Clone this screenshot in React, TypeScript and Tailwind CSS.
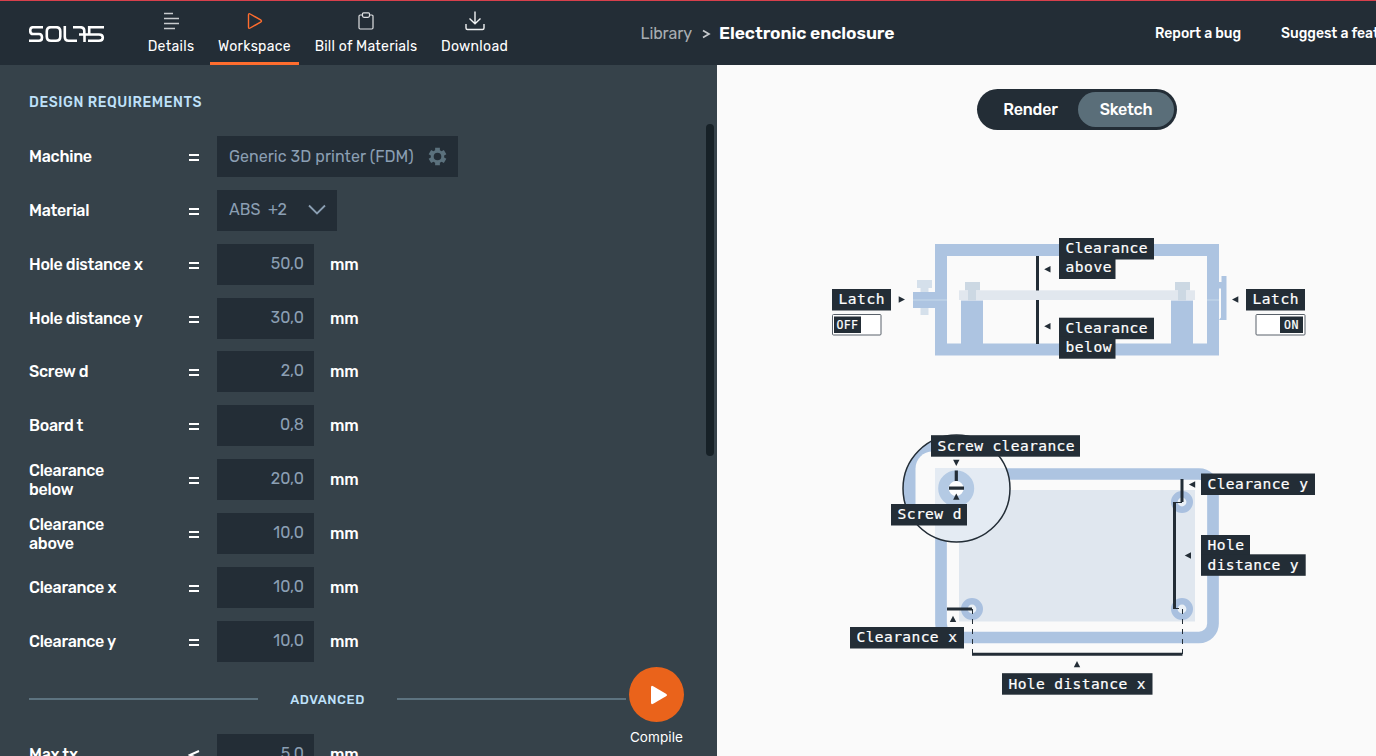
import React from "react";

const INK = "#232d36";

function Tab({ label, icon, active, className, tracking }: { label: string; icon: React.ReactNode; active?: boolean; className: string; tracking: string }) {
  return (
    <button className={`flex h-full shrink-0 flex-col items-center border-b-[3px] pt-[9px] ${active ? "border-[#ff6d2e]" : "border-transparent"} ${className}`}>
      <span className="flex h-[22px] items-center">{icon}</span>
      <span className={`mt-[5px] text-[14px] leading-[20px] whitespace-nowrap text-white ${tracking}`}>{label}</span>
    </button>
  );
}

const fields = [
  ["Hole distance x", "50,0"],
  ["Hole distance y", "30,0"],
  ["Screw d", "2,0"],
  ["Board t", "0,8"],
  ["Clearance below", "20,0"],
  ["Clearance above", "10,0"],
  ["Clearance x", "10,0"],
  ["Clearance y", "10,0"],
];

function Row({ label, sign = "=", children }: { label: string; sign?: string; children: React.ReactNode }) {
  return (
    <div className="flex h-[41px] shrink-0 items-center">
      <div className="w-[159px] shrink-0 pr-[54px] text-[16px] leading-[19px] font-medium tracking-[-0.28px] text-white">
        <span className={label.length > 12 && label.startsWith("Clear") ? "block" : "block whitespace-nowrap"}>{label}</span>
      </div>
      <div className="flex w-[29px] shrink-0 pt-[1px]">
        <svg width="12" height="12" viewBox="0 0 12 12" fill="none" stroke="white" strokeWidth="2">
          {sign === "=" ? <path d="M1 4h10M1 9h10" /> : <path d="M11 2L2 6l9 4" />}
        </svg>
      </div>
      {children}
    </div>
  );
}

function NumberField({ value }: { value: string }) {
  return (
    <>
      <div className="h-[41px] w-[97px] shrink-0 bg-[#232d36] pt-[9px] pr-[10px] text-right text-[16px] leading-[21px] text-[#8b9fb3]">{value}</div>
      <span className="ml-4 pt-[1px] text-[16px] font-medium tracking-[-0.2px] text-white">mm</span>
    </>
  );
}

function Tag({ x, y, w, h = 21.5, text, tw }: { x: number; y: number; w: number; h?: number; text: string; tw: number }) {
  return (
    <g>
      <rect x={x} y={y} width={w} height={h} fill={INK} />
      <text x={x + 6.5} y={y + 15.3} textLength={tw} fill="white" stroke="white" strokeWidth="0.2" fontSize="14.6" fontFamily='"DejaVu Sans Mono", monospace'>{text}</text>
    </g>
  );
}

function Arrow({ x, y, r }: { x: number; y: number; r: number }) {
  return <path d="M-3.3 0L3 -3.2V3.2Z" fill={INK} transform={`translate(${x} ${y}) rotate(${r})`} />;
}

function Hole({ x, y }: { x: number; y: number }) {
  return <circle cx={x} cy={y} r="7.7" fill="#eaf0f6" stroke="#a9c0df" strokeWidth="6.6" />;
}

function Sketch() {
  const mono = '"DejaVu Sans Mono", monospace';
  return (
    <svg className="block h-[626px] w-[659px]" viewBox="717 130 659 626">
      <rect x="941" y="250" width="272" height="99.5" fill="none" stroke="#adc4e1" strokeWidth="12" />
      <path d="M917 280h15v8h-3.5v27h-8v-27H917Z" fill="#d5e0eb" />
      <rect x="913" y="292" width="23" height="16" fill="#adc4e1" />
      <path d="M913 300h34M1207 300h12" stroke="#bfd2e8" strokeWidth="1.6" />
      <path d="M1219 282h2.5v-6h5v44h-7.5l2-2.5v-29H1219Z" fill="#adc4e1" />
      <rect x="961" y="300.5" width="22" height="44" fill="#adc4e1" />
      <rect x="1171" y="300.5" width="22" height="44" fill="#adc4e1" />
      <rect x="959" y="290.3" width="236" height="9.7" fill="#e1e7ee" />
      <path d="M965 282h15v8.3h-4v10.2h-8v-10.2h-3ZM1175 282h15v8.3h-4v10.2h-8v-10.2h-3Z" fill="#ccd8e3" />
      <path d="M1037.5 256v34.5M1037.5 300v44" stroke={INK} strokeWidth="3" />
      <Arrow x={1047.5} y={269.3} r={0} />
      <Arrow x={1047.5} y={326.3} r={0} />
      <Tag x={1059} y={238} w={95} text="Clearance" tw={82} />
      <Tag x={1059} y={257} w={56.5} h={22} text="above" tw={46} />
      <Tag x={1059} y={317.7} w={95} text="Clearance" tw={82} />
      <Tag x={1059} y={336.7} w={56.5} h={22} text="below" tw={46} />

      <Tag x={832} y={289} w={59} text="Latch" tw={46} />
      <Arrow x={901.7} y={299.5} r={180} />
      <rect x="832.5" y="314.5" width="48.5" height="20.5" rx="1" fill="white" stroke="#59616a" />
      <rect x="834" y="316.5" width="27" height="16.5" fill={INK} />
      <text x="836.5" y="329" textLength="21.5" fontSize="11.5" fontFamily={mono} fill="white" stroke="white" strokeWidth="0.2">OFF</text>
      <Tag x={1246} y={289} w={59} text="Latch" tw={46} />
      <Arrow x={1235.3} y={299.5} r={0} />
      <rect x="1256" y="314.5" width="49" height="20.5" rx="1" fill="white" stroke="#59616a" />
      <rect x="1280" y="316.5" width="23" height="16.5" fill={INK} />
      <text x="1284" y="329" textLength="14.5" fontSize="11.5" fontFamily={mono} fill="white" stroke="white" strokeWidth="0.2">ON</text>

      <rect x="941" y="474" width="272" height="163.5" rx="14" fill="none" stroke="#adc4e1" strokeWidth="11.7" />
      <rect x="959" y="490" width="236" height="131.5" fill="#e0e7ef" />
      <Hole x={1182} y={502} />
      <Hole x={972} y={609} />
      <Hole x={1182} y={609} />
      <path d="M1182 479v23M1174.5 502v107" stroke={INK} strokeWidth="3" />
      <path d="M1174 502.5h8M1174 608.5h5" stroke={INK} />
      <path d="M947 609h25M972 654.3h210.5" stroke={INK} strokeWidth="3" />
      <path d="M972.5 609v46M1182.5 609v46" stroke={INK} strokeDasharray="5 5" />

      <clipPath id="lens"><circle cx="956.5" cy="488.5" r="53.5" /></clipPath>
      <g clipPath="url(#lens)">
        <rect x="900" y="430" width="115" height="115" fill="#adc4e1" />
        <rect x="915.5" y="451.5" width="130" height="130" rx="17" fill="#fafafa" />
        <rect x="935" y="468" width="80" height="80" fill="#e4ebf3" />
      </g>
      <circle cx="956.5" cy="488.5" r="53.5" fill="none" stroke={INK} strokeWidth="1.5" />
      <circle cx="956.2" cy="488.5" r="12.75" fill="#fcfdfe" stroke="#b4cae4" strokeWidth="10.5" />
      <path d="M956.3 470.5V481M949 488.2h15" stroke={INK} strokeWidth="3.2" />
      <Arrow x={956.3} y={462.7} r={270} />
      <Arrow x={956.3} y={496.7} r={90} />
      <Tag x={931} y={435.2} w={149} text="Screw clearance" tw={137} />
      <Tag x={891} y={504} w={76} text="Screw d" tw={64} />

      <Arrow x={1192.2} y={484.5} r={0} />
      <Arrow x={1188} y={555.5} r={0} />
      <Tag x={1201} y={473.5} w={114} text="Clearance y" tw={100.5} />
      <Tag x={1201} y={535} w={49} text="Hole" tw={36.5} />
      <Tag x={1201} y={554.3} w={104.7} text="distance y" tw={91} />
      <Arrow x={953} y={619} r={90} />
      <Tag x={850} y={627} w={114} text="Clearance x" tw={100.5} />
      <Arrow x={1077} y={664.3} r={90} />
      <Tag x={1002} y={673.2} w={150.5} text="Hole distance x" tw={137} />
    </svg>
  );
}

export default function App() {
  return (
    <div className="flex h-[756px] w-[1376px] flex-col overflow-hidden bg-[#fafafa] font-['Rubik','Roboto',sans-serif]">
      <header className="flex h-[65px] shrink-0 overflow-hidden border-t border-[#d8404c] bg-[#232d36]">
        <div className="flex w-[140px] shrink-0 pt-[25px] pl-[29px]">
          <svg width="76" height="17" viewBox="29 26 76 17" fill="none" stroke="white" strokeWidth="2.6">
            <path d="M43 27.2H33Q30.2 27.2 30.2 30.5Q30.2 34 33 34H39Q42 34 42 37.5Q42 40.8 39 40.8H29M50 27.2H56Q60.3 27.2 60.3 31.5V36.5Q60.3 40.8 56 40.8H51Q46.8 40.8 46.8 36.5V31.5Q46.8 27.2 51 27.2M64.8 26V37Q64.8 40.8 68.5 40.8H77M73 27.2H80Q84.3 27.2 84.3 31V34M79 34.5H99Q102.8 34.5 102.8 37.6Q102.8 40.8 99 40.8H88M84.5 34V42M104 27.2H89.2V34.5" />
          </svg>
        </div>
        <nav className="flex shrink-0">
          <Tab label="Details" className="w-[62px]" tracking="tracking-[0.3px]" icon={<svg className="ml-[2px]" width="16" height="18" viewBox="0 0 16 18" stroke="#c8cbce" strokeWidth="1.3"><path d="M0 1.5h9M0 6.5h15M0 11.5h15M0 16.5h11" /></svg>} />
          <Tab label="Workspace" active className="ml-2 w-[89px]" tracking="tracking-[0.3px]" icon={<svg width="18" height="18" viewBox="0 0 18 18" fill="none" stroke="#ff6d2e" strokeWidth="1.4"><path d="M2.500 3Q2.500 1 4.200 2L15 8.200Q16 9 15 9.800L4.200 16Q2.500 17 2.500 15Z" /></svg>} />
          <Tab label="Bill of Materials" className="ml-2 w-[118px]" tracking="tracking-[0.25px]" icon={<svg width="18" height="20" viewBox="0 0 18 20" fill="none" stroke="#dfe1e3" strokeWidth="1.2"><path d="M5.500 4H3.200Q2 4 2 5.200V16.800Q2 18 3.200 18H14.800Q16 18 16 16.800V5.200Q16 4 14.800 4H12.500" /><path d="M6.500 1.800h5q1 0 1 1v2q0 1.500-1.500 1.500H7q-1.500 0-1.500-1.500v-2q0-1 1-1Z" /></svg>} />
          <Tab label="Download" className="ml-2 w-[83px]" tracking="tracking-[0.3px]" icon={<svg width="20" height="20" viewBox="0 0 20 20" fill="none" stroke="#f0f1f2" strokeWidth="1.4"><path d="M10 .5V12.500M4.500 7.500L10 12.800L15.500 7.500M1 13V17Q1 18.500 2.500 18.500H17.500Q19 18.500 19 17V13" /></svg>} />
        </nav>
        <div className="ml-[124.500px] flex h-[64px] w-[514.500px] shrink-0 items-center pt-[1px]">
          <span className="w-[52px] text-[16px] tracking-[-0.1px] text-[#a8adb2]">Library</span>
          <svg className="ml-[9px]" width="9" height="10" viewBox="0 0 9 10" fill="none" stroke="#c7cacd" strokeWidth="1.7"><path d="M1 1.500L7 5L1 8.500" /></svg>
          <span className="ml-[8.500px] text-[17.500px] font-semibold tracking-[-0.080px] whitespace-nowrap text-white">Electronic enclosure</span>
        </div>
        <div className="flex h-[64px] shrink-0 items-center gap-10 text-[14px] font-medium tracking-[-0.030px] whitespace-nowrap text-white">
          <span>Report a bug</span>
          <span>Suggest a feature</span>
        </div>
      </header>

      <main className="flex min-h-0 flex-1">
        <section className="relative h-full w-[717px] shrink-0 overflow-hidden bg-[#36424a] pl-[29px]">
          <h2 className="mt-[28px] text-[14px] leading-[20px] font-medium tracking-[0.580px] text-[#bfe1fa]">DESIGN REQUIREMENTS</h2>
          <div className="mt-[23.060px] flex flex-col gap-[12.870px]">
            <Row label="Machine">
              <div className="flex h-[41px] w-[241px] items-center bg-[#232d36] pl-3 text-[16px] whitespace-nowrap text-[#8b9fb3]">
                <span className="w-[199px] tracking-[0.050px]">Generic 3D printer (FDM)</span>
                <svg width="19" height="19" viewBox="0 0 24 24" fill="#5b717d"><path fillRule="evenodd" d="M9 1h6v3.200l2.200 1.300 2.800-1.700 3.200 5.300-2.800 1.700v2.400l2.800 1.700-3.200 5.300-2.800-1.700L15 19.800V23H9v-3.200l-2.200-1.300L4 20.200.8 14.900l2.800-1.700v-2.400L.8 9.100 4 3.800l2.800 1.700L9 4.200ZM12 7.200a4.800 4.800 0 1 0 0 9.600a4.800 4.800 0 0 0 0-9.600Z" /></svg>
              </div>
            </Row>
            <Row label="Material">
              <div className="flex h-[41px] w-[120px] items-center bg-[#232d36] pl-3 text-[16px] text-[#8b9fb3]">
                <span className="w-[39px]">ABS</span>
                <span className="w-[40px]">+2</span>
                <svg width="18" height="12" viewBox="0 0 18 12" fill="none" stroke="#8b9fb3" strokeWidth="1.8"><path d="M1 1.500L9 9.500L17 1.500" /></svg>
              </div>
            </Row>
            {fields.map(([label, value]) => (
              <Row key={label} label={label}><NumberField value={value} /></Row>
            ))}
          </div>
          <div className="mt-[27px] flex h-[20px] w-[597px] items-center">
            <div className="h-[2px] w-[229px] bg-[#5d7380]" />
            <div className="w-[139px] pt-[2px] text-center text-[13px] leading-[18px] font-medium tracking-[0.550px] text-[#bfe1fa]">ADVANCED</div>
            <div className="h-[2px] w-[229px] bg-[#5d7380]" />
          </div>
          <div className="mt-[25px]">
            <Row label="Max tx" sign="<"><NumberField value="5,0" /></Row>
          </div>
          <div className="absolute top-[59px] left-[706px] h-[332px] w-[8px] rounded-full bg-[#172127]" />
          <div className="absolute top-[602px] left-[616px] flex w-[81px] flex-col items-center">
            <button className="flex size-[55px] items-center justify-center rounded-full bg-[#ea631b]">
              <svg width="18" height="20" viewBox="0 0 18 20" fill="white" className="ml-[4px]"><path d="M1 2.500Q1 0 3.200 1.200L16 8.700Q18 10 16 11.300L3.200 18.800Q1 20 1 17.500Z" /></svg>
            </button>
            <span className="mt-[5px] font-['Inter',sans-serif] text-[13.500px] leading-[20px] tracking-[0.100px] text-white">Compile</span>
          </div>
        </section>

        <section className="flex w-[659px] flex-col items-center pt-6">
          <div className="ml-[260px] flex h-[41px] w-[200px] shrink-0 self-start rounded-full bg-[#232d36] p-[3px] text-[16px] font-medium tracking-[-0.200px] text-white">
            <button className="w-[98px] pl-[3px]">Render</button>
            <button className="w-[96px] rounded-full bg-[#5a6e79]">Sketch</button>
          </div>
          <Sketch />
        </section>
      </main>
    </div>
  );
}
